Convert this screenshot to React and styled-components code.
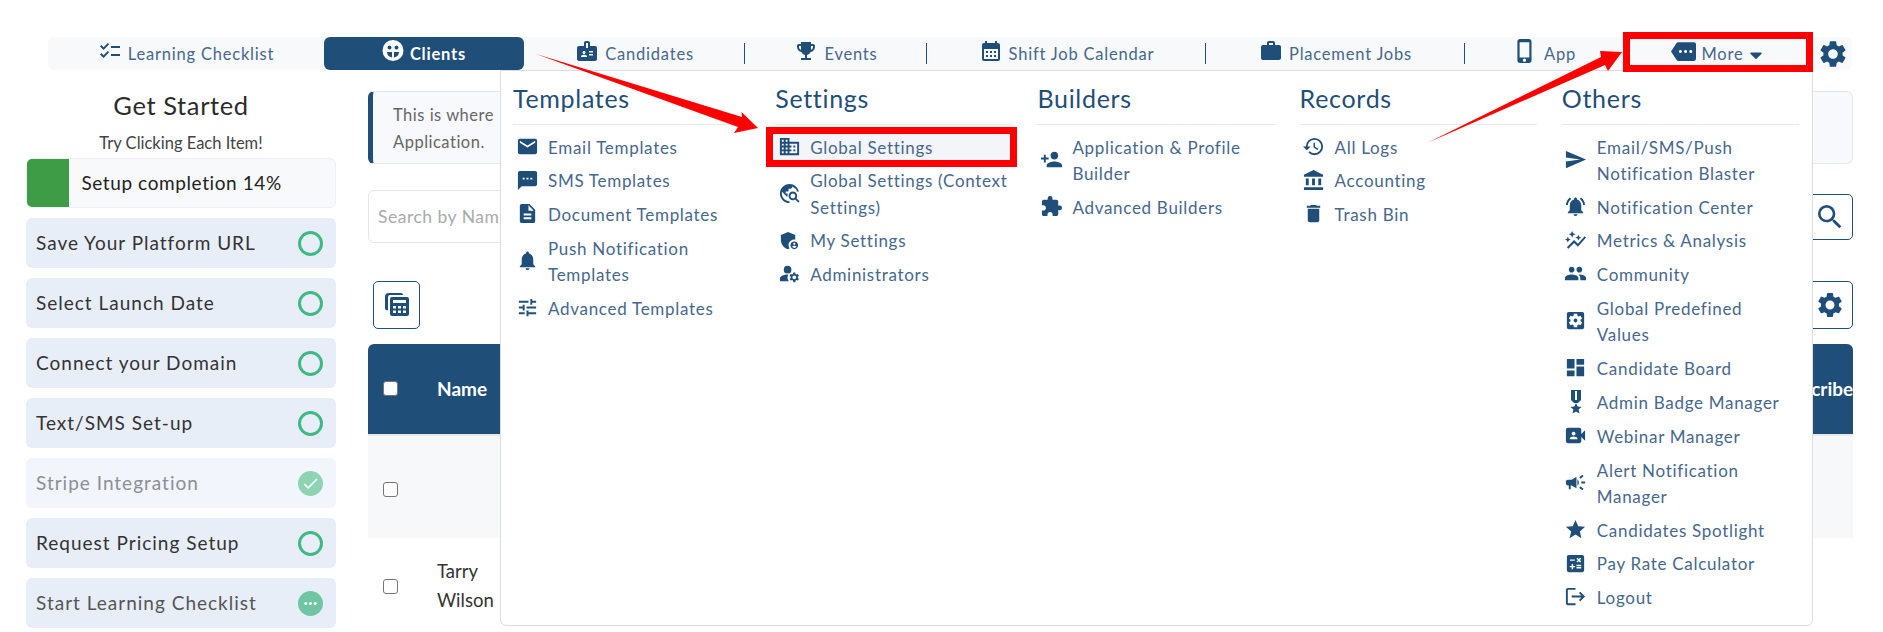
import React from 'react';
import styled, { createGlobalStyle } from 'styled-components';
import {
  MdAccountBalance, MdAdminPanelSettings, MdAutoGraph, MdBadge, MdCalculate, MdCalendarMonth,
  MdCampaign, MdChecklist, MdDashboard, MdDelete, MdDescription, MdDomain, MdEmail,
  MdEmojiEvents, MdExtension, MdHistory, MdLogout, MdManageAccounts, MdMore, MdNotifications,
  MdNotificationsActive, MdPeople, MdPersonAdd, MdPhoneIphone, MdSearch, MdSend,
  MdSettings, MdSettingsApplications, MdSms, MdStar, MdTravelExplore, MdTune,
  MdVideoCameraFront, MdWork, MdCheck, MdMoreHoriz,
} from 'react-icons/md';
import { FaCaretDown } from 'react-icons/fa';

const NAVY = '#1f4e79';
const FONT = '"Lato", "Open Sans", sans-serif';

const Global = createGlobalStyle`
  html, body {
    margin: 0;
    padding: 0;
    background: #fff;
    font-family: ${FONT};
  }
`;

const Page = styled.div`
  position: relative;
  width: 1883px;
  height: 632px;
  overflow: hidden;
  padding-top: 37px;
  box-sizing: border-box;
`;

const NavWrap = styled.div`
  position: relative;
  margin: 0 31px 0 48px;
`;

const Nav = styled.nav`
  display: flex;
  height: 33px;
  background: #f7f9fb;
  border-radius: 6px;
`;

const Tab = styled.div`
  position: relative;
  flex: 0 0 ${(p) => p.$w}px;
  display: flex;
  align-items: center;
  justify-content: center;
  gap: 6px;
  box-sizing: border-box;
  font-size: 16.5px;
  letter-spacing: 0.8px;
  color: ${(p) => (p.$active ? '#fff' : '#46688c')};
  font-weight: ${(p) => (p.$active ? 700 : 400)};
  background: ${(p) => (p.$active ? NAVY : 'transparent')};
  border-radius: ${(p) => (p.$active ? '6px' : '0')};
  svg { color: ${(p) => (p.$active ? '#fff' : NAVY)}; margin-top: -5px; }
  ${(p) => p.$sep && `
    &::after {
      content: '';
      position: absolute;
      right: 0;
      top: 6px;
      bottom: 6px;
      width: 1px;
      background: ${NAVY};
    }
  `}
  ${(p) => p.$boxed && `
    &::before {
      content: '';
      position: absolute;
      left: 0;
      right: 0;
      top: -5px;
      bottom: -2px;
      border: 7px solid #f00;
      z-index: 20;
    }
  `}
`;

const Caret = styled(FaCaretDown)`
  margin: 3px 0 0 -4px !important;
`;

const GearTab = styled.div`
  flex: 0 0 39px;
  display: flex;
  align-items: center;
  justify-content: center;
  color: ${NAVY};
`;

const Dropdown = styled.div`
  position: absolute;
  top: 33px;
  left: 452px;
  width: 1313px;
  height: 556px;
  box-sizing: border-box;
  padding: 12px 13px 0 12px;
  display: grid;
  grid-template-columns: repeat(5, 1fr);
  column-gap: 25px;
  background: #fff;
  border: 1px solid #dcdde0;
  border-radius: 0 0 6px 6px;
  z-index: 5;
`;

const MenuCol = styled.div`
  min-width: 0;
`;

const MenuTitle = styled.h4`
  margin: 0 0 6px;
  padding-bottom: 11px;
  border-bottom: 1.5px solid #e6e8eb;
  font-size: 25px;
  line-height: 30px;
  font-weight: 400;
  letter-spacing: 0.7px;
  color: ${NAVY};
`;

const MenuItem = styled.div`
  position: relative;
  display: flex;
  align-items: center;
  padding: 3.65px 0;
  font-size: 17px;
  line-height: 26.4px;
  letter-spacing: 0.7px;
  color: #46688c;
  white-space: pre-line;
  background: ${(p) => (p.$boxed ? '#f4f5f9' : 'transparent')};
  ${(p) => p.$boxed && `
    &::after {
      content: '';
      position: absolute;
      left: -9px;
      right: -5px;
      top: -4px;
      bottom: -2px;
      border: 7px solid #f00;
    }
  `}
`;

const MenuIcon = styled.span`
  flex: 0 0 28px;
  margin-right: 7px;
  margin-bottom: 3px;
  display: flex;
  justify-content: center;
  color: ${NAVY};
`;

const Content = styled.div`
  display: grid;
  grid-template-columns: 310px 1485px;
  column-gap: 32px;
  padding: 21px 0 0 26px;
`;

const Sidebar = styled.aside`
  display: flex;
  flex-direction: column;
  gap: 10px;
`;

const SideTitle = styled.h3`
  margin: 0 0 12px;
  text-align: center;
  font-size: 25.5px;
  line-height: 28px;
  font-weight: 400;
  letter-spacing: 0.6px;
  color: #2b2b2b;
`;

const SideSub = styled.div`
  margin: 0 0 -7px;
  text-align: center;
  font-size: 16.5px;
  line-height: 24px;
  color: #444;
`;

const Progress = styled.div`
  height: 50px;
  display: flex;
  align-items: center;
  box-sizing: border-box;
  padding-bottom: 2px;
  background: #f8f9fb;
  border: 1px solid #eeeff2;
  border-radius: 6px;
  overflow: hidden;
  font-size: 19px;
  letter-spacing: 0.6px;
  color: #222;
`;

const ProgressFill = styled.div`
  align-self: stretch;
  margin: -1px 12px -3px -1px;
  background: #3f9c46;
`;

const Step = styled.div`
  height: 50px;
  box-sizing: border-box;
  display: flex;
  align-items: center;
  justify-content: space-between;
  padding: 0 13px 2px 10px;
  border-radius: 6px;
  background: ${(p) => (p.$faded ? '#f2f5fc' : '#e8eef8')};
  color: ${(p) => (p.$faded ? '#8a8f96' : p.$soft ? '#555' : '#333')};
  font-size: 19px;
  letter-spacing: 1px;
`;

const StepMark = styled.span`
  width: 25px;
  height: 25px;
  margin-bottom: -2px;
  box-sizing: border-box;
  border-radius: 50%;
  display: flex;
  align-items: center;
  justify-content: center;
  color: #fff;
  border: ${(p) => (p.$state === 'todo' ? '3px solid #3fb983' : 'none')};
  background: ${(p) => (p.$state === 'done' ? '#8dd3b4' : p.$state === 'busy' ? '#70c5a2' : 'transparent')};
`;

const Main = styled.main`
  min-width: 0;
`;

const Info = styled.div`
  height: 73px;
  box-sizing: border-box;
  padding: 10px 20px;
  background: #f8f9fc;
  border: 1px solid #e8e9ec;
  border-left: 5px solid ${NAVY};
  border-radius: 6px;
  font-size: 16.5px;
  line-height: 27px;
  color: #666;
  letter-spacing: 0.5px;
`;

const SearchRow = styled.div`
  margin-top: 26px;
  display: flex;
  align-items: center;
  gap: 8px;
`;

const SearchBox = styled.input`
  flex: 1;
  height: 53px;
  box-sizing: border-box;
  padding: 0 9px;
  border: 1px solid #e4e5e8;
  border-radius: 6px;
  font-family: ${FONT};
  font-size: 17.5px;
  letter-spacing: 0.5px;
  &::placeholder { color: #aaa; }
`;

const IconButton = styled.div`
  width: ${(p) => p.$w}px;
  height: ${(p) => p.$h}px;
  display: flex;
  align-items: center;
  justify-content: center;
  box-sizing: border-box;
  border: 1px solid ${NAVY};
  border-radius: 5px;
  color: ${NAVY};
`;

const Tools = styled.div`
  margin: 38px 0 15px;
  padding-left: 5px;
  display: flex;
  justify-content: space-between;
`;

const TableHead = styled.div`
  height: 92px;
  box-sizing: border-box;
  display: flex;
  align-items: center;
  padding: 0 0 2px 15px;
  overflow: hidden;
  background: ${NAVY};
  border-bottom: 2px solid #e8eaee;
  border-radius: 6px 6px 0 0;
  color: #fff;
  font-weight: 700;
  font-size: 19px;
`;

const TableRow = styled.div`
  height: ${(p) => p.$h}px;
  display: flex;
  align-items: center;
  padding-left: 15px;
  background: ${(p) => (p.$striped ? '#f7f8fa' : '#fff')};
  font-size: 18.5px;
  line-height: 29px;
  color: #333;
`;

const Check = styled.input.attrs({ type: 'checkbox' })`
  appearance: none;
  width: 15px;
  height: 15px;
  margin: ${(p) => p.$drop || 0}px 39px 0 0;
  border: 1.5px solid #767676;
  border-radius: 3px;
  background: #fff;
`;

const NameCell = styled.span`
  flex: 1;
`;

const Subscribed = styled.span`
  margin-right: -11px;
`;

const Overlay = styled.svg`
  position: absolute;
  left: 0;
  top: 0;
  z-index: 30;
  pointer-events: none;
`;

const BadgeIcon = () => (
  <svg width="22" height="24" viewBox="0 0 22 24" fill="currentColor">
    <path d="M6 0h10v10l-3 3H9l-3-3z" />
    <path fill="#fff" d="M10 1h2v9h-2z" />
    <path d="M11 13l1.7 3.6 3.8.4-2.9 2.6.9 3.9-3.5-2-3.5 2 .9-3.9L5.5 17l3.8-.4z" />
  </svg>
);

const ClientsIcon = () => (
  <svg width="22" height="24" viewBox="0 0 22 24" fill="currentColor">
    <path
      fillRule="evenodd"
      d="M11 1a10.500 10.500 0 1 0 0 21 10.500 10.500 0 0 0 0-21zM7.500 6.500a2 2 0 1 1 0 4 2 2 0 0 1 0-4zm7 0a2 2 0 1 1 0 4 2 2 0 0 1 0-4zM5 13h5v5.500A6 6 0 0 1 5 13zm7 0h5a6 6 0 0 1-5 5.500z"
    />
  </svg>
);

const GridIcon = () => (
  <svg width="26" height="26" viewBox="0 0 26 26" fill="currentColor">
    <path d="M5 1h12a2 2 0 0 1 2 2H6a2 2 0 0 0-2 2v13a2 2 0 0 1-3-2V5a4 4 0 0 1 4-4z" />
    <path
      fillRule="evenodd"
      d="M8 5h15a2 2 0 0 1 2 2v15a2 2 0 0 1-2 2H8a2 2 0 0 1-2-2V7a2 2 0 0 1 2-2zm1 3v3h13V8zm0 6v2.500h3V14zm5 0v2.500h3V14zm5 0v2.500h3V14zM9 18.500V21h3v-2.500zm5 0V21h3v-2.500zm5 0V21h3v-2.500z"
    />
  </svg>
);

const menus = [
  {
    title: 'Templates',
    items: [
      [MdEmail, 'Email Templates'],
      [MdSms, 'SMS Templates'],
      [MdDescription, 'Document Templates'],
      [MdNotifications, 'Push Notification\nTemplates'],
      [MdTune, 'Advanced Templates'],
    ],
  },
  {
    title: 'Settings',
    items: [
      [MdDomain, 'Global Settings', true],
      [MdTravelExplore, 'Global Settings (Context\nSettings)'],
      [MdAdminPanelSettings, 'My Settings'],
      [MdManageAccounts, 'Administrators'],
    ],
  },
  {
    title: 'Builders',
    items: [
      [MdPersonAdd, 'Application & Profile\nBuilder'],
      [MdExtension, 'Advanced Builders'],
    ],
  },
  {
    title: 'Records',
    items: [
      [MdHistory, 'All Logs'],
      [MdAccountBalance, 'Accounting'],
      [MdDelete, 'Trash Bin'],
    ],
  },
  {
    title: 'Others',
    items: [
      [MdSend, 'Email/SMS/Push\nNotification Blaster'],
      [MdNotificationsActive, 'Notification Center'],
      [MdAutoGraph, 'Metrics & Analysis'],
      [MdPeople, 'Community'],
      [MdSettingsApplications, 'Global Predefined\nValues'],
      [MdDashboard, 'Candidate Board'],
      [BadgeIcon, 'Admin Badge Manager'],
      [MdVideoCameraFront, 'Webinar Manager'],
      [MdCampaign, 'Alert Notification\nManager'],
      [MdStar, 'Candidates Spotlight'],
      [MdCalculate, 'Pay Rate Calculator'],
      [MdLogout, 'Logout'],
    ],
  },
];

const steps = [
  ['Save Your Platform URL', 'todo'],
  ['Select Launch Date', 'todo'],
  ['Connect your Domain', 'todo'],
  ['Text/SMS Set-up', 'todo'],
  ['Stripe Integration', 'done'],
  ['Request Pricing Setup', 'todo'],
  ['Start Learning Checklist', 'busy'],
];

export default function App() {
  return (
    <Page>
      <Global />
      <NavWrap>
        <Nav>
          <Tab $w={276}><MdChecklist size={24} />Learning Checklist</Tab>
          <Tab $w={200} $active><ClientsIcon />Clients</Tab>
          <Tab $w={221} $sep><MdBadge size={24} />Candidates</Tab>
          <Tab $w={182} $sep><MdEmojiEvents size={24} />Events</Tab>
          <Tab $w={279} $sep><MdCalendarMonth size={24} />Shift Job Calendar</Tab>
          <Tab $w={259} $sep><MdWork size={24} />Placement Jobs</Tab>
          <Tab $w={158}><MdPhoneIphone size={26} />App</Tab>
          <Tab $w={190} $boxed><MdMore size={25} />More<Caret size={20} /></Tab>
          <GearTab><MdSettings size={32} /></GearTab>
        </Nav>
        <Dropdown>
          {menus.map((menu) => (
            <MenuCol key={menu.title}>
              <MenuTitle>{menu.title}</MenuTitle>
              {menu.items.map(([Icon, label, boxed]) => (
                <MenuItem key={label} $boxed={boxed}>
                  <MenuIcon><Icon size={23} /></MenuIcon>
                  <span>{label}</span>
                </MenuItem>
              ))}
            </MenuCol>
          ))}
        </Dropdown>
      </NavWrap>
      <Content>
        <Sidebar>
          <div>
            <SideTitle>Get Started</SideTitle>
            <SideSub>Try Clicking Each Item!</SideSub>
          </div>
          <Progress>
            <ProgressFill style={{ width: `${310 * 0.14}px` }} />
            Setup completion 14%
          </Progress>
          {steps.map(([label, state]) => (
            <Step key={label} $faded={state === 'done'} $soft={state === 'busy'}>
              {label}
              <StepMark $state={state}>
                {state === 'done' && <MdCheck size={19} />}
                {state === 'busy' && <MdMoreHoriz size={19} />}
              </StepMark>
            </Step>
          ))}
        </Sidebar>
        <Main>
          <Info>
            This is where
            <br />
            Application.
          </Info>
          <SearchRow>
            <SearchBox placeholder="Search by Name" />
            <IconButton $w={46} $h={46}><MdSearch size={32} /></IconButton>
          </SearchRow>
          <Tools>
            <IconButton $w={47} $h={48}><GridIcon /></IconButton>
            <IconButton $w={47} $h={48}><MdSettings size={30} /></IconButton>
          </Tools>
          <TableHead>
            <Check />
            <NameCell>Name</NameCell>
            <Subscribed>Subscribed</Subscribed>
          </TableHead>
          <TableRow $h={102} $striped><Check $drop={5} /></TableRow>
          <TableRow $h={96}>
            <Check />
            <NameCell>Tarry<br />Wilson</NameCell>
          </TableRow>
        </Main>
      </Content>
      <Overlay width="1883" height="632" viewBox="0 0 1883 632">
        <polygon fill="#f00" points="536,54 742,117 741.500,112 758,128 734,133 738,127" />
        <polygon fill="#f00" points="1427,143 1601,57 1600,51 1622,52 1608,71 1605,65" />
      </Overlay>
    </Page>
  );
}
